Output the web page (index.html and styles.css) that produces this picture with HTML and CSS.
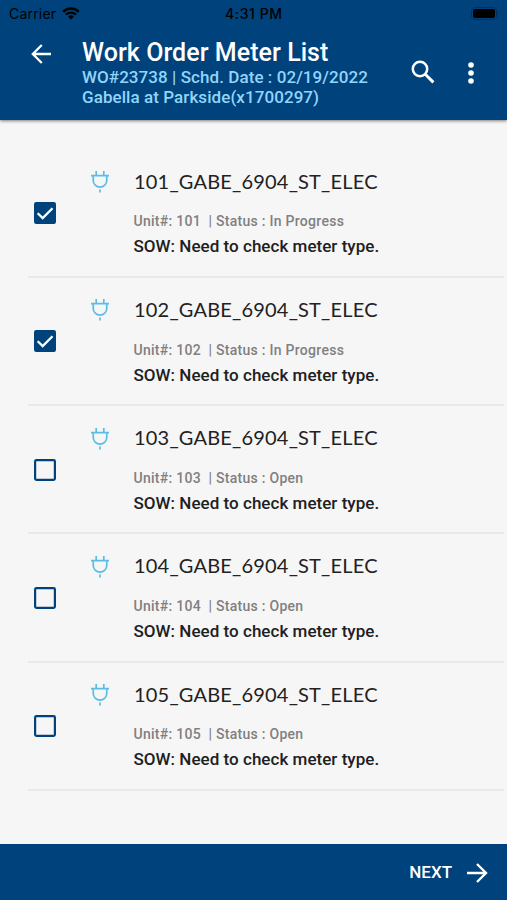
FILE: index.html
```
<!DOCTYPE html>
<html lang="en">
<head>
<meta charset="utf-8">
<title>Work Order Meter List</title>
<link rel="stylesheet" href="styles.css">
</head>
<body>
<svg width="0" height="0" class="defs">
  <symbol id="plug" viewBox="0 0 20 24"><path d="M1 5.6H19M6.2 5.6V1M13.8 5.6V1M3.2 5.6V10.3a6.8 6.8 0 0 0 13.6 0V5.6M10 19.5V22.5" fill="none" stroke="#5bbde6" stroke-width="1.7"/></symbol>
  <symbol id="on" viewBox="0 0 22 22"><rect width="22" height="22" rx="2.2" fill="#00427c"/><path d="M3.7 11.2L8.7 16.1L18.5 6.2" fill="none" stroke="#fff" stroke-width="2.3"/></symbol>
  <symbol id="off" viewBox="0 0 22 22"><rect x="1.1" y="1.1" width="19.8" height="19.8" rx="1.3" fill="none" stroke="#00427c" stroke-width="2.2"/></symbol>
</svg>
<header class="header">
  <div class="status">
    <span class="carrier">Carrier</span>
    <svg class="wifi" width="18" height="13" viewBox="0 0 18 13"><path d="M1.2 4.8a11 11 0 0 1 15.6 0M4 7.7a7.1 7.1 0 0 1 10 0" fill="none" stroke="#000" stroke-width="2.4"/><path d="M9 12.5L6.2 9.7a4 4 0 0 1 5.6 0z"/></svg>
    <span class="time">4:31 PM</span>
    <svg class="battery" width="28" height="13" viewBox="0 0 28 13"><rect x=".5" y=".5" width="25" height="12" rx="3.5" fill="none" stroke="#00305c"/><rect x="2" y="2" width="22" height="9" rx="2"/><path d="M26.7 4.8q1.5 1.7 0 3.4z" fill="#00305c"/></svg>
  </div>
  <div class="bar">
    <svg class="back" width="20" height="20" viewBox="0 0 20 20"><path d="M20 10H1.8M10.8 1L1.8 10L10.8 19" fill="none" stroke="#fff" stroke-width="2.3"/></svg>
    <div class="titles">
      <h1>Work Order Meter List</h1>
      <p class="wo">WO#23738 | Schd. Date : 02/19/2022</p>
      <p class="site">Gabella at Parkside(x1700297)</p>
    </div>
    <svg class="search" width="24" height="24" viewBox="0 0 24 24"><circle cx="9" cy="9" r="7.2" fill="none" stroke="#fff" stroke-width="2.5"/><path d="M14 14L22.4 22.4" stroke="#fff" stroke-width="3"/></svg>
    <svg class="more" width="6" height="22" viewBox="0 0 6 22" fill="#fff"><circle cx="3" cy="3" r="2.8"/><circle cx="3" cy="11" r="2.8"/><circle cx="3" cy="19" r="2.8"/></svg>
  </div>
</header>
<main class="list">
  <article class="row"><svg class="check"><use href="#on"/></svg><svg class="plug"><use href="#plug"/></svg><div class="info"><h2>101_GABE_6904_ST_ELEC</h2><p class="meta">Unit#: 101&nbsp; | Status : In Progress</p><p class="sow">SOW: Need to check meter type.</p></div></article>
  <article class="row"><svg class="check"><use href="#on"/></svg><svg class="plug"><use href="#plug"/></svg><div class="info"><h2>102_GABE_6904_ST_ELEC</h2><p class="meta">Unit#: 102&nbsp; | Status : In Progress</p><p class="sow">SOW: Need to check meter type.</p></div></article>
  <article class="row"><svg class="check"><use href="#off"/></svg><svg class="plug"><use href="#plug"/></svg><div class="info"><h2>103_GABE_6904_ST_ELEC</h2><p class="meta">Unit#: 103&nbsp; | Status : Open</p><p class="sow">SOW: Need to check meter type.</p></div></article>
  <article class="row"><svg class="check"><use href="#off"/></svg><svg class="plug"><use href="#plug"/></svg><div class="info"><h2>104_GABE_6904_ST_ELEC</h2><p class="meta">Unit#: 104&nbsp; | Status : Open</p><p class="sow">SOW: Need to check meter type.</p></div></article>
  <article class="row"><svg class="check"><use href="#off"/></svg><svg class="plug"><use href="#plug"/></svg><div class="info"><h2>105_GABE_6904_ST_ELEC</h2><p class="meta">Unit#: 105&nbsp; | Status : Open</p><p class="sow">SOW: Need to check meter type.</p></div></article>
</main>
<footer class="footer">
  <span>NEXT</span>
  <svg width="21" height="20" viewBox="0 0 21 20"><path d="M0 10H19M10 1L19 10L10 19" fill="none" stroke="#fff" stroke-width="2.4"/></svg>
</footer>
</body>
</html>
```
FILE: styles.css
```
* { box-sizing: border-box; }
body {
  margin: 0;
  height: 900px;
  display: flex;
  flex-direction: column;
  overflow: hidden;
  background: #f6f6f6;
  font-family: Roboto, "Liberation Sans", sans-serif;
}
h1, h2, p { margin: 0; white-space: nowrap; }
svg { display: block; flex: none; }
.defs { position: absolute; }
.header {
  height: 120px;
  flex: none;
  background: #00427c;
  box-shadow: 0 1px 3px rgba(0, 0, 0, .5);
}
.status {
  height: 28px;
  display: grid;
  grid-template-columns: 53px 172px 1fr 28px;
  align-items: center;
  padding: 0 8px 0 9px;
  font: 500 13px/28px Inter, sans-serif;
  color: #000;
}
.carrier { font-weight: 400; font-size: 14px; letter-spacing: .2px; }
.wifi { margin-top: -2px; }
.time { font-weight: 500; font-size: 14px; letter-spacing: .6px; margin-left: -9px; }
.battery { margin-top: -1px; }
.bar { display: flex; padding-left: 31px; }
.back { margin-top: 16px; }
.titles { width: 329px; margin-left: 31px; padding-top: 10px; }
h1 { font-size: 25px; line-height: 29px; font-weight: 500; color: #fff; letter-spacing: .05px; }
.wo, .site { font-size: 17px; line-height: 20px; font-weight: 500; color: #91d5fa; letter-spacing: .07px; }
.search { margin-top: 32px; }
.more { margin: 34px 0 0 33px; }
.list { flex: 1; padding: 29.5px 3px 0 28px; }
.row { height: 128.25px; display: flex; border-bottom: 2px solid #e9e9e9; }
.check { width: 22px; height: 22px; margin: 52.5px 0 0 6px; }
.plug { width: 20px; height: 24px; margin: 20.5px 0 0 34px; }
.info { margin-left: 24px; padding-top: 17px; }
h2 { font: 400 20px/28px Lato, sans-serif; color: #222; letter-spacing: .2px; }
.meta { margin: 16.8px 0 0 -.5px; font-size: 14px; line-height: 20px; color: #808080; font-weight: 500; letter-spacing: .28px; }
.sow { margin: 3px 0 0 -.5px; font-size: 17px; line-height: 24px; color: #202020; font-weight: 500; letter-spacing: .03px; }
.footer {
  height: 56px;
  flex: none;
  display: flex;
  align-items: center;
  justify-content: flex-end;
  gap: 15px;
  padding: 2px 19px 0 0;
  background: #00427c;
  color: #fff;
  font-size: 17px;
  font-weight: 500;
}
.footer span { margin-top: -2px; }
```
